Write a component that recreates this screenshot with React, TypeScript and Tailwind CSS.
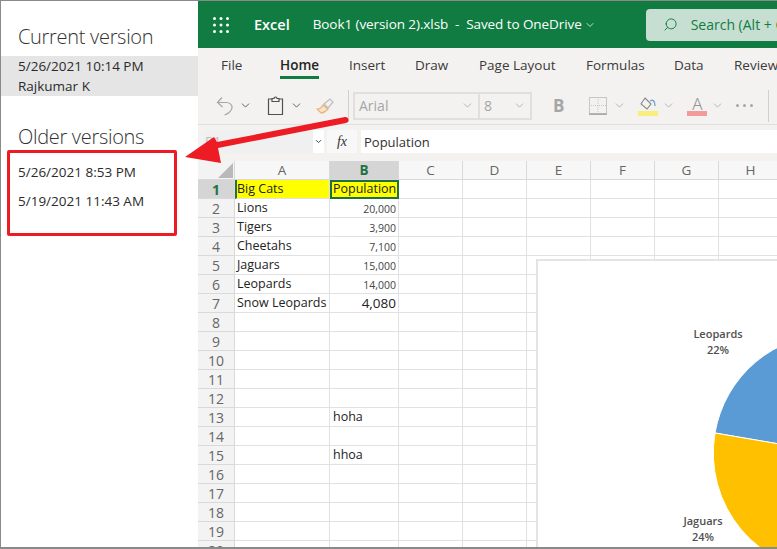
import React from 'react';
import { ChevronDown, Search } from 'lucide-react';

const columns = ['A', 'B', 'C', 'D', 'E', 'F', 'G', 'H'];

const cells: Record<number, { a?: string; b?: string; small?: boolean }> = {
  1: { a: 'Big Cats', b: 'Population' },
  2: { a: 'Lions', b: '20,000', small: true },
  3: { a: 'Tigers', b: '3,900', small: true },
  4: { a: 'Cheetahs', b: '7,100', small: true },
  5: { a: 'Jaguars', b: '15,000', small: true },
  6: { a: 'Leopards', b: '14,000', small: true },
  7: { a: 'Snow Leopards', b: '4,080' },
  13: { b: 'hoha' },
  15: { b: 'hhoa' },
};

const rows = Array.from({ length: 20 }, (_, i) => i + 1);
const tabs = [
  { label: 'File', cls: 'ml-[23px] w-[59px]' },
  { label: 'Home', cls: 'w-[69px] font-semibold text-[#252423]' },
  { label: 'Insert', cls: 'w-[66px]' },
  { label: 'Draw', cls: 'w-[64px]' },
  { label: 'Page Layout', cls: 'w-[107px]' },
  { label: 'Formulas', cls: 'w-[88px]' },
  { label: 'Data', cls: 'w-[60px]' },
  { label: 'Review', cls: 'w-[60px]' },
];

const Chev = ({ className = '' }: { className?: string }) => (
  <ChevronDown className={`w-[13px] h-[13px] shrink-0 ${className}`} strokeWidth={1.5} />
);

const SheetRow = ({ row }: { row: number }) => {
  const data = cells[row] ?? {};
  const first = row === 1;
  return (
    <>
      <div
        className={`h-[19px] flex items-center justify-center border-b border-r border-[#d9d9d9] text-[14px] ${
          first ? 'bg-[#d5d5d5] font-bold text-[#217346]' : 'bg-[#f3f3f3] text-[#666666]'
        }`}
      >
        {row}
      </div>
      <div
        className={`h-[19px] flex items-center text-[12.5px] text-[#222222] whitespace-nowrap border-b border-r border-[#e1e1e1] ${
          first ? 'bg-[#ffff00] border-l-2 border-l-[#217346]' : 'pl-[2px]'
        }`}
      >
        {data.a}
      </div>
      <div
        className={`h-[19px] flex items-center whitespace-nowrap text-[#222222] ${
          first
            ? 'bg-[#ffff00] border-2 border-[#1e6f42] pl-[1px] text-[12.5px]'
            : 'border-b border-r border-[#e1e1e1]'
        } ${data.small ? 'justify-end pr-[2px] pt-[3px] text-[10.5px] text-[#444444]' : ''} ${
          row === 7 ? 'justify-end pr-[2px] text-[13.5px]' : ''
        } ${row === 13 || row === 15 ? 'pl-[3px] text-[12.5px]' : ''}`}
      >
        {data.b}
      </div>
      {columns.slice(2).map((c) => (
        <div key={c} className="h-[19px] border-b border-r border-[#e1e1e1]" />
      ))}
    </>
  );
};

export default function App() {
  return (
    <div className="relative w-[777px] h-[549px] overflow-hidden flex bg-white border-t border-l border-b-2 border-[#8a8a8a] font-['Open_Sans','Noto_Sans',sans-serif]">
      {/* version list */}
      <aside className="w-[197px] shrink-0 flex flex-col text-[#2b2b2b]">
        <h2 className="mt-[22px] pl-[17px] h-[33px] text-[20px] tracking-[-0.3px] leading-[28px] font-light text-[#333333]">Current version</h2>
        <div className="h-[40px] bg-[#e5e5e5] pl-[17px] text-[13.5px] leading-[20px]">
          <div>5/26/2021 10:14 PM</div>
          <div>Rajkumar K</div>
        </div>
        <h2 className="mt-[27px] pl-[17px] h-[27px] text-[20px] tracking-[-0.3px] leading-[28px] font-light text-[#333333]">Older versions</h2>
        <div className="mt-[12px] pl-[17px] text-[13.5px] leading-[20px]">5/26/2021 8:53 PM</div>
        <div className="mt-[9px] pl-[17px] text-[13.5px] leading-[20px]">5/19/2021 11:43 AM</div>
      </aside>

      <main className="flex-1 min-w-0 flex flex-col overflow-hidden">
        {/* title bar */}
        <header className="h-[47px] shrink-0 bg-[#107c41] text-white flex items-center whitespace-nowrap overflow-hidden">
          <svg className="ml-[15px] w-[16px] h-[16px] shrink-0" viewBox="0 0 16 16" fill="white">
            {[1.5, 8, 14.5].flatMap((y) =>
              [1.5, 8, 14.5].map((x) => <circle key={`${x}-${y}`} cx={x} cy={y} r="1.5" />)
            )}
          </svg>
          <span className="ml-[25px] shrink-0 text-[14.5px] font-semibold">Excel</span>
          <span className="ml-[23px] shrink-0 text-[13.5px] tracking-[-0.08px]">Book1 (version 2).xlsb&nbsp; - &nbsp;Saved to OneDrive</span>
          <ChevronDown className="ml-[2px] w-[12px] h-[12px] shrink-0" strokeWidth={1.5} />
          <div className="ml-[50px] h-[32px] w-[160px] shrink-0 rounded-[4px] bg-[#c7dfd2] text-[#107c41] flex items-center">
            <Search className="ml-[17px] w-[15px] h-[15px] shrink-0 -scale-x-100" strokeWidth={1.5} />
            <span className="ml-[13px] text-[14px]">Search (Alt + Q)</span>
          </div>
        </header>

        {/* ribbon */}
        <div className="h-[39px] shrink-0 bg-[#f3f2f1] flex items-center text-[13.5px] text-[#3b3a39] whitespace-nowrap">
          {tabs.map((t) => (
            <div key={t.label} className={`relative shrink-0 h-[39px] leading-[34px] ${t.cls}`}>
              {t.label}
              {t.label === 'Home' && <div className="absolute left-0 top-[28px] w-[39px] h-[3px] bg-[#107c41]" />}
            </div>
          ))}
        </div>

        {/* toolbar */}
        <div className="h-[38px] shrink-0 bg-[#f3f2f1] border-b border-[#e1dfdd] flex items-center text-[#605e5c] whitespace-nowrap">
          <svg className="ml-[18px] w-[18px] h-[20px] shrink-0" viewBox="0 0 18 20" fill="none" stroke="#a6a6a6" strokeWidth="1.2">
            <path d="M6 1.500L1.500 6.500L6.500 11" />
            <path d="M1.500 6.500H10C14 6.500 16.500 9 16 12C15.500 15 12 18 8.500 19" />
          </svg>
          <Chev className="ml-[5px] text-[#444444]" />
          <svg className="ml-[15px] w-[17px] h-[20px] shrink-0" viewBox="0 0 17 20" fill="none" stroke="#505050" strokeWidth="1.2">
            <path d="M5 3H1.500v15.500h14V3H12" />
            <path d="M5 5.500V2.500h2a1.500 1.500 0 0 1 3 0h2v3z" />
          </svg>
          <Chev className="ml-[6px] text-[#444444]" />
          <svg className="ml-[13px] w-[20px] h-[20px] shrink-0" viewBox="0 0 20 20" fill="none" strokeWidth="1.2">
            <path d="M1 13c3 0 5-2 6-4l5 4c-2 2-5 4-7 4z" fill="#fbe3c4" stroke="#e8b27a" />
            <path d="M8 8l6-5 3 3-5 6z" stroke="#bdbdbd" />
          </svg>
          <div className="ml-[12px] w-px h-[32px] shrink-0 bg-[#d2d0ce]" />
          <div className="ml-[4px] w-[127px] h-[28px] shrink-0 border-2 border-[#e1dfdd] flex items-center justify-between px-[4px] text-[14px] text-[#a6a6a6]">
            Arial
            <Chev className="text-[#a6a6a6]" />
          </div>
          <div className="w-[52px] h-[28px] shrink-0 border-2 border-l-0 border-[#e1dfdd] flex items-center justify-between px-[4px] text-[14px] text-[#a6a6a6]">
            8
            <Chev className="text-[#a6a6a6]" />
          </div>
          <span className="ml-[21px] text-[17px] font-bold text-[#a6a6a6]">B</span>
          <svg className="ml-[25px] w-[18px] h-[18px] shrink-0" viewBox="0 0 18 18" fill="none" stroke="#c8c6c4" strokeWidth="1">
            <rect x="0.5" y="0.5" width="17" height="16" />
            <path d="M9 0v17M0 8.500h18" strokeDasharray="1 1" />
            <path d="M0 17.200h18" strokeWidth="1.500" stroke="#a6a6a6" />
          </svg>
          <Chev className="ml-[6px] text-[#a6a6a6]" />
          <svg className="ml-[12px] w-[20px] h-[20px] shrink-0" viewBox="0 0 20 20" fill="none">
            <path d="M7 2l6 6-4 5-6-5z" stroke="#8a8886" strokeWidth="1.100" />
            <path d="M12 5c3-2 5 0 5 5" stroke="#7aa7d8" strokeWidth="1.500" />
            <rect x="0" y="15" width="20" height="5" fill="#f7ee7f" />
          </svg>
          <Chev className="ml-[4px] text-[#a6a6a6]" />
          <div className="ml-[12px] w-[20px] h-[20px] shrink-0 flex flex-col items-center justify-end">
            <span className="text-[17px] leading-[15px] font-light text-[#8a8886]">A</span>
            <div className="w-[20px] h-[5px] bg-[#f59a9a]" />
          </div>
          <Chev className="ml-[4px] text-[#a6a6a6]" />
          <span className="ml-[12px] flex gap-[4px] shrink-0">
            <i className="w-[3px] h-[3px] rounded-full bg-[#a6a6a6]" />
            <i className="w-[3px] h-[3px] rounded-full bg-[#a6a6a6]" />
            <i className="w-[3px] h-[3px] rounded-full bg-[#a6a6a6]" />
          </span>
          <div className="ml-[15px] w-px h-[32px] shrink-0 bg-[#d2d0ce]" />
        </div>

        {/* formula bar */}
        <div className="h-[36px] shrink-0 bg-[#f3f2f1] flex items-start pt-[5px] whitespace-nowrap">
          <div className="ml-[5px] w-[121px] h-[23px] shrink-0 flex justify-between bg-[#f0f0f0]">
            <span className="pl-[2px] text-[13px] leading-[23px] text-[#bdbdbd]">B1</span>
            <div className="w-[11px] bg-white flex items-center justify-center">
              <ChevronDown className="w-[9px] h-[9px] text-[#444444]" strokeWidth={2.5} />
            </div>
          </div>
          <div className="ml-[3px] w-[30px] h-[23px] shrink-0 flex items-center justify-center bg-[#f8f8f8] font-['Liberation_Serif',serif] italic text-[14px] text-[#333333]">
            fx
          </div>
          <div className="ml-[4px] flex-1 h-[23px] bg-white flex items-center pl-[3px] pt-[2px] text-[13px] text-[#323130]">
            Population
          </div>
        </div>

        {/* sheet */}
        <div className="relative flex-1 overflow-hidden font-['Open_Sans','Noto_Sans',sans-serif]">
          <div className="grid grid-cols-[37px_95px_69px_64px_64px_64px_64px_64px_64px] w-[621px]">
            <div className="h-[19px] bg-[#f3f3f3] border-b border-r border-[#d9d9d9] flex items-end justify-end pr-px pb-px">
              <div className="w-0 h-0 border-l-[15px] border-l-transparent border-b-[15px] border-b-[#b9b9b9]" />
            </div>
            {columns.map((c) => (
              <div
                key={c}
                className={`h-[19px] flex items-center justify-center border-b border-r border-[#d9d9d9] text-[13.5px] ${
                  c === 'B' ? 'bg-[#d5d5d5] font-bold text-[#217346]' : 'bg-[#f7f7f7] text-[#666666]'
                }`}
              >
                {c}
              </div>
            ))}
            {rows.map((r) => (
              <SheetRow key={r} row={r} />
            ))}
          </div>
        </div>
      </main>

      {/* embedded chart */}
      <div className="absolute left-[535px] top-[258px] w-[242px] h-[289px] bg-white border-t-2 border-l-2 border-[#e4e4e4] overflow-hidden text-[11px] leading-[16px] font-semibold text-[#505050]">
        <svg className="absolute left-0 top-0 w-[242px] h-[289px]" viewBox="0 0 242 289">
          <path d="M294 192 L177 172 A119 119 0 0 1 294 73 Z" fill="#5b9bd5" stroke="white" />
          <path d="M294 192 L177 172 A119 119 0 0 0 294 311 Z" fill="#ffc000" stroke="white" />
        </svg>
        <div className="absolute left-[153px] top-[65px] w-[54px] text-center">Leopards<br />22%</div>
        <div className="absolute left-[142px] top-[252px] w-[46px] text-center">Jaguars<br />24%</div>
      </div>

      {/* callout */}
      <div className="absolute left-[6px] top-[149px] w-[170px] h-[86px] border-[3px] border-[#ed1c24] rounded-[2px]" />
      <svg className="absolute left-[180px] top-[110px] w-[172px] h-[56px]" viewBox="0 0 172 56">
        <path d="M4 46 L33 26 L36 31 L164 6 A3 3 0 0 1 165 12 L37 37 L40 52 Z" fill="#ed1c24" />
      </svg>
    </div>
  );
}
